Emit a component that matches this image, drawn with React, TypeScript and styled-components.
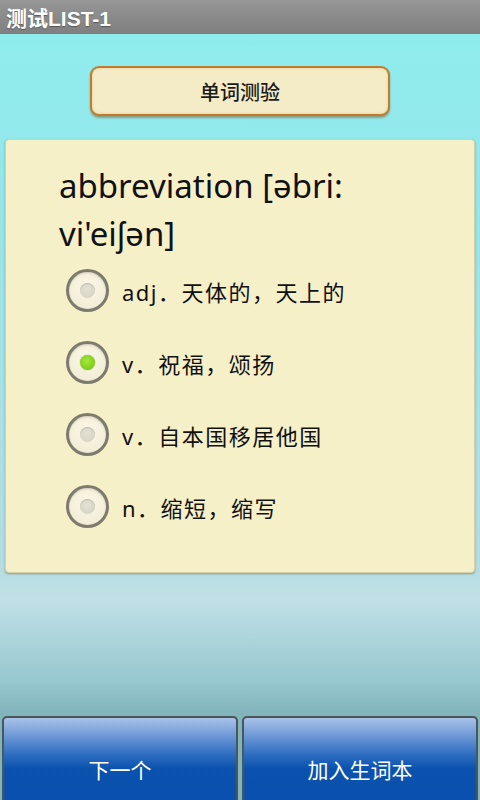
import React, { useState } from 'react';
import styled, { createGlobalStyle } from 'styled-components';

const GlobalStyle = createGlobalStyle`
  html, body {
    margin: 0;
    padding: 0;
    height: 100%;
  }
  body {
    font-family: "Noto Sans", "Noto Sans CJK SC", sans-serif;
  }
`;

const Screen = styled.div`
  width: 480px;
  height: 800px;
  display: flex;
  flex-direction: column;
  overflow: hidden;
  background: linear-gradient(180deg, #8eeeee 0%, #95e6ea 25%, #b4dde2 70%, #c0e0e6 75%, #98c8d0 85%, #82b4bc 89%);
`;

const TitleBar = styled.div`
  height: 34px;
  flex-shrink: 0;
  background: linear-gradient(180deg, #969696 0%, #7f7f7f 100%);
  display: flex;
  align-items: center;
  padding-left: 6px;
  color: #fff;
  font-family: "Liberation Sans", "Noto Sans CJK SC", sans-serif;
  font-weight: 700;
  font-size: 21px;
  text-shadow: 0 1px 1px rgba(0, 0, 0, 0.35);
`;

const Content = styled.div`
  flex: 1;
  display: flex;
  flex-direction: column;
  align-items: center;
  padding: 32px 5px 0;
`;

const HeaderButton = styled.div`
  width: 300px;
  height: 50px;
  box-sizing: border-box;
  border: 2px solid #c27a2c;
  border-radius: 9px;
  background: #f4ecc6;
  box-shadow: 0 2px 2px rgba(120, 70, 20, 0.45), inset 0 0 3px rgba(200, 150, 80, 0.4);
  display: flex;
  align-items: center;
  justify-content: center;
  font-family: "Noto Sans CJK SC", sans-serif;
  font-weight: 500;
  font-size: 20px;
  color: #1a1a1a;
`;

const Card = styled.div`
  align-self: stretch;
  margin-top: 23px;
  height: 434px;
  box-sizing: border-box;
  background: #f6f0c9;
  border-radius: 4px;
  border: 1px solid #d8d0a8;
  box-shadow: 0 1px 2px rgba(100, 90, 50, 0.5);
  padding: 22px 20px 0 53px;
`;

const Word = styled.div`
  font-family: "Noto Sans", sans-serif;
  font-size: 33px;
  line-height: 48px;
  color: #111;
  padding-right: 40px;
`;

const Options = styled.div`
  display: flex;
  flex-direction: column;
  gap: 29px;
  margin-top: 11px;
  margin-left: 7px;
`;

const Option = styled.label`
  display: flex;
  align-items: center;
  gap: 13px;
  height: 43px;
  cursor: pointer;
  font-family: "Noto Sans", "Noto Sans CJK SC", sans-serif;
  font-size: 22px;
  letter-spacing: 1.5px;
  color: #111;
`;

const Radio = styled.span<{ $checked: boolean }>`
  width: 43px;
  height: 43px;
  box-sizing: border-box;
  border-radius: 50%;
  border: 3px solid #7d7a6e;
  background: radial-gradient(circle at 50% 40%, #fbf8e8 0%, #efe9cf 100%);
  box-shadow: inset 0 1px 2px rgba(0, 0, 0, 0.15);
  display: flex;
  align-items: center;
  justify-content: center;
  flex-shrink: 0;

  &::after {
    content: '';
    width: 15px;
    height: 15px;
    border-radius: 50%;
    background: ${(p) =>
      p.$checked
        ? 'radial-gradient(circle at 45% 40%, #a6e83c 0%, #7ccc18 70%, #64a812 100%)'
        : 'radial-gradient(circle at 45% 40%, #e4e2d4 0%, #d2cfc0 100%)'};
    box-shadow: ${(p) => (p.$checked ? '0 0 1px #5a8a10' : 'inset 0 1px 1px rgba(0,0,0,0.15)')};
  }
`;

const Footer = styled.div`
  display: flex;
  gap: 4px;
  padding: 0 2px;
  height: 84px;
  flex-shrink: 0;
`;

const BlueButton = styled.button`
  flex: 1;
  border: 2px solid #4a5658;
  border-bottom: none;
  border-radius: 5px 5px 0 0;
  background: linear-gradient(180deg, #a9c2e8 0%, #6d98d6 22%, #2c6cc0 45%, #0a52ae 62%, #0a50ae 100%);
  color: #fff;
  font-family: "Noto Sans CJK SC", sans-serif;
  font-size: 21px;
  padding-top: 20px;
  cursor: pointer;
`;

const options = [
  'adj．天体的，天上的',
  'v．祝福，颂扬',
  'v．自本国移居他国',
  'n．缩短，缩写',
];

const App: React.FC = () => {
  const [selected, setSelected] = useState(1);

  return (
    <Screen>
      <GlobalStyle />
      <TitleBar>测试LIST-1</TitleBar>
      <Content>
        <HeaderButton>单词测验</HeaderButton>
        <Card>
          <Word>abbreviation [əbri: vi'eiʃən]</Word>
          <Options>
            {options.map((opt, index) => (
              <Option key={index} onClick={() => setSelected(index)}>
                <Radio $checked={selected === index} />
                {opt}
              </Option>
            ))}
          </Options>
        </Card>
      </Content>
      <Footer>
        <BlueButton>下一个</BlueButton>
        <BlueButton>加入生词本</BlueButton>
      </Footer>
    </Screen>
  );
};

export default App;
